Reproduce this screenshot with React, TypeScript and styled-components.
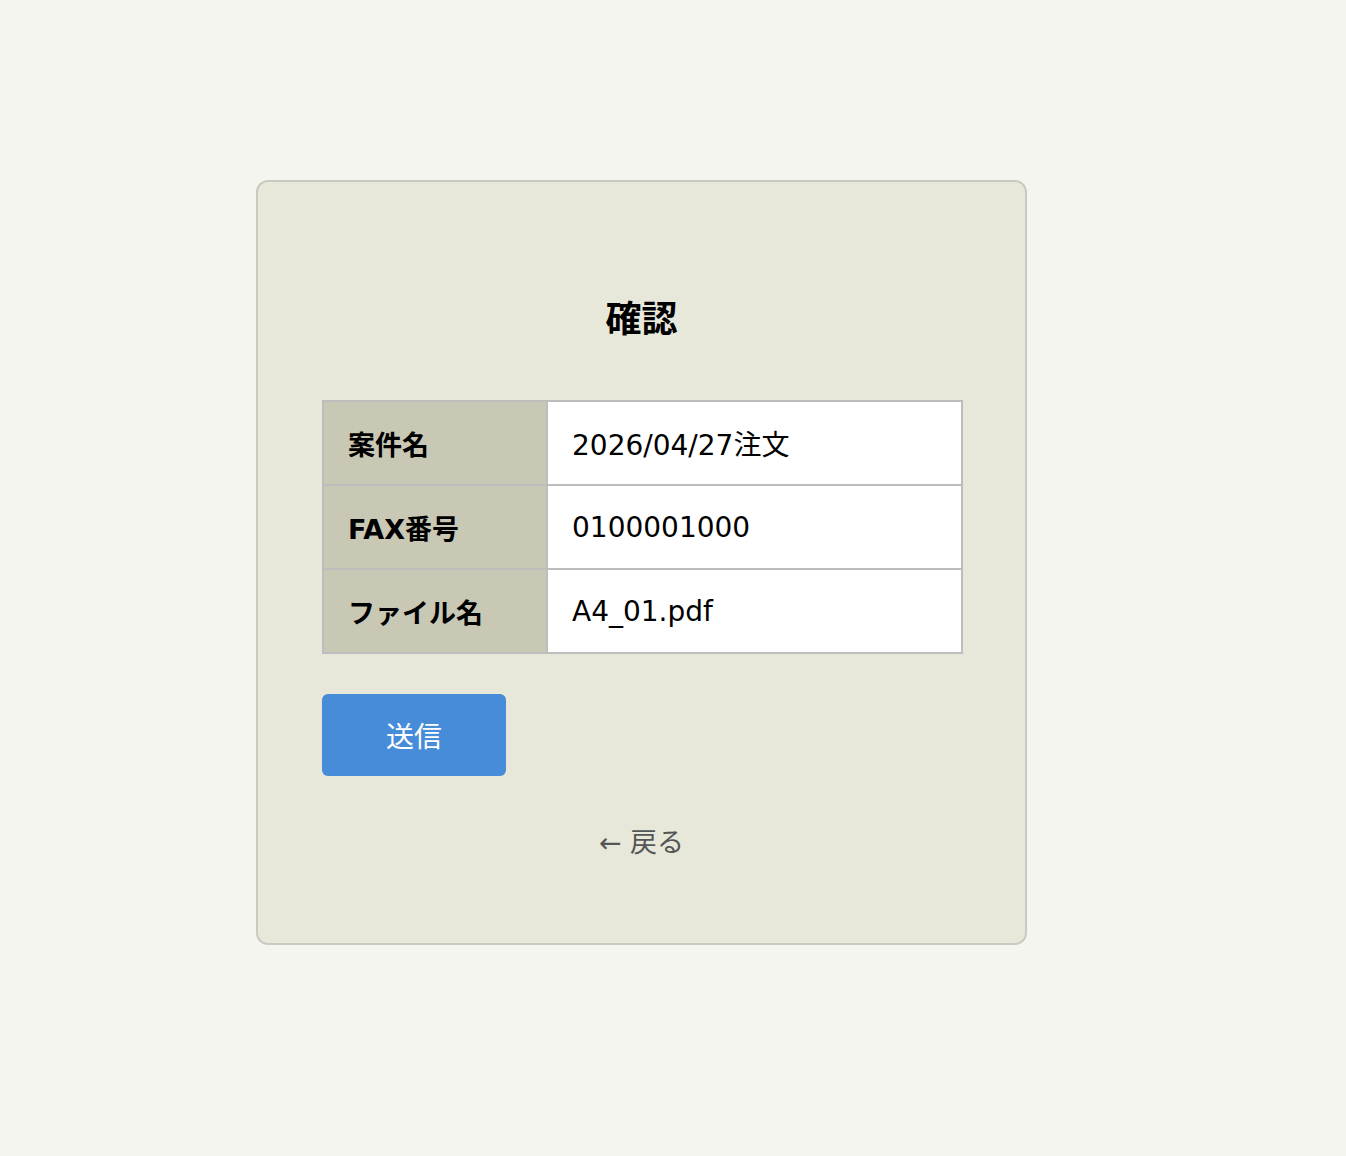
import React, { FC } from 'react'
import styled, { createGlobalStyle } from 'styled-components'

type Row = {
  label: string
  value: string
}

const rows: Row[] = [
  { label: '案件名', value: '2026/04/27注文' },
  { label: 'FAX番号', value: '0100001000' },
  { label: 'ファイル名', value: 'A4_01.pdf' },
]

const GlobalStyle = createGlobalStyle`
  html, body {
    margin: 0;
    padding: 0;
    background: #f5f5ef;
  }
  body {
    font-family: "DejaVu Sans", "Noto Sans CJK JP", sans-serif;
    color: #111;
  }
`

const App: FC = () => {
  return (
    <>
      <GlobalStyle />
      <PageStyles>
        <CardStyles>
          <TitleStyles>確認</TitleStyles>
          <TableStyles>
            <tbody>
              {rows.map((row, index) => (
                <tr key={index}>
                  <LabelCell>{row.label}</LabelCell>
                  <ValueCell>{row.value}</ValueCell>
                </tr>
              ))}
            </tbody>
          </TableStyles>
          <SendButton type="button">送信</SendButton>
          <BackLink href="#">← 戻る</BackLink>
        </CardStyles>
      </PageStyles>
    </>
  )
}

const PageStyles = styled.div`
  display: flex;
  align-items: flex-start;
  padding: 180px 0 212px 256px;
`

const CardStyles = styled.div`
  display: flex;
  flex-direction: column;
  width: 771px;
  box-sizing: border-box;
  padding: 64px 64px 80px;
  background: #e7e7da;
  border: 2px solid #cacac2;
  border-radius: 12px;
`

const TitleStyles = styled.h1`
  margin: 48px 0 62px;
  text-align: center;
  font-family: "Noto Sans CJK JP", sans-serif;
  font-size: 36px;
  line-height: 44px;
  font-weight: 700;
  color: #000;
`

const TableStyles = styled.table`
  width: 641px;
  border-collapse: collapse;
  border: 2px solid #bdbdbd;
  table-layout: fixed;
`

const LabelCell = styled.th`
  width: 224px;
  height: 84px;
  box-sizing: border-box;
  padding: 0 24px;
  background: #c8c8b5;
  border: 2px solid #bdbdbd;
  text-align: left;
  font-size: 27px;
  font-weight: 700;
  color: #000;
  white-space: nowrap;
`

const ValueCell = styled.td`
  height: 84px;
  box-sizing: border-box;
  padding: 0 24px;
  background: #fff;
  border: 2px solid #bdbdbd;
  font-size: 28px;
  font-weight: 400;
  color: #000;
  white-space: nowrap;
`

const SendButton = styled.button`
  align-self: flex-start;
  width: 184px;
  height: 82px;
  margin-top: 40px;
  border: none;
  border-radius: 6px;
  background: #468cd9;
  color: #fff;
  font-family: "Noto Sans CJK JP", sans-serif;
  font-size: 28px;
  cursor: pointer;
`

const BackLink = styled.a`
  align-self: center;
  margin-top: 47px;
  font-size: 27px;
  line-height: 40px;
  color: #555;
  text-decoration: none;
`

export default App
